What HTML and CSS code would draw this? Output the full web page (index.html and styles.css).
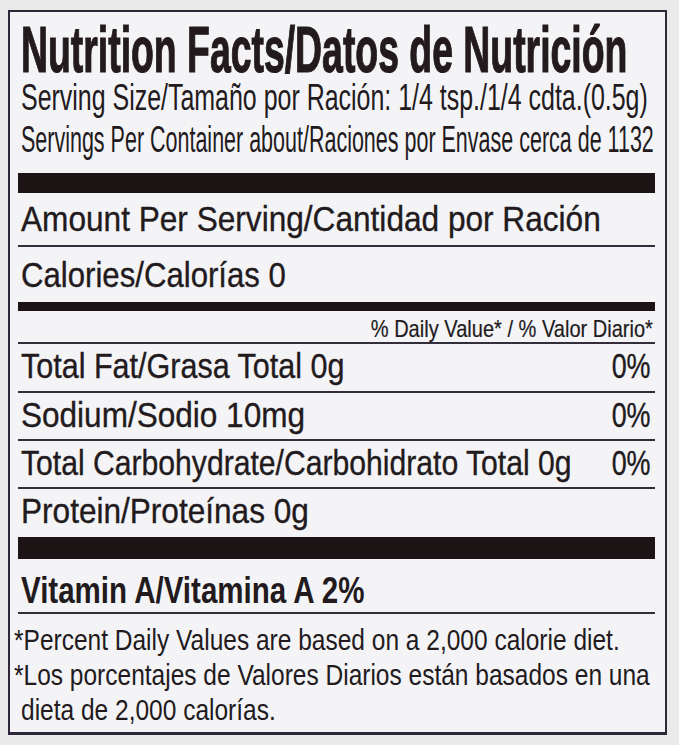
FILE: index.html
```html
<!DOCTYPE html>
<html lang="en">
<head>
<meta charset="utf-8">
<title>Nutrition Facts / Datos de Nutrición</title>
<link rel="stylesheet" href="styles.css">
</head>
<body>
<section class="label">
  <h1 class="title"><span class="sx">Nutrition Facts/Datos de Nutrición</span></h1>
  <div class="serving">
    <p class="serv serv-1"><span class="sx">Serving Size/Tamaño por Ración: 1/4 tsp./1/4 cdta.(0.5g)</span></p>
    <p class="serv serv-2"><span class="sx">Servings Per Container about/Raciones por Envase cerca de 1132</span></p>
  </div>
  <div class="bar bar-lg bar-top"></div>
  <div class="row row-amount"><span class="sx">Amount Per Serving/Cantidad por Ración</span></div>
  <div class="row row-cal ruled"><span class="sx">Calories/Calorías 0</span></div>
  <div class="bar bar-md"></div>
  <div class="dv"><span class="sx">% Daily Value* / % Valor Diario*</span></div>
  <div class="row nut ruled nut-fat"><span class="sx name">Total Fat/Grasa Total 0g</span><span class="sx pct">0%</span></div>
  <div class="row nut ruled nut-sod"><span class="sx name">Sodium/Sodio 10mg</span><span class="sx pct">0%</span></div>
  <div class="row nut ruled nut-carb"><span class="sx name">Total Carbohydrate/Carbohidrato Total 0g</span><span class="sx pct">0%</span></div>
  <div class="row nut ruled nut-pro"><span class="sx name">Protein/Proteínas 0g</span></div>
  <div class="bar bar-lg bar-bottom"></div>
  <div class="row row-vit"><span class="sx">Vitamin A/Vitamina A 2%</span></div>
  <div class="foot">
    <p class="fn"><span class="sx">*Percent Daily Values are based on a 2,000 calorie diet.</span></p>
    <p class="fn"><span class="sx">*Los porcentajes de Valores Diarios están basados en una</span></p>
    <p class="fn fn-cont"><span class="sx">dieta de 2,000 calorías.</span></p>
  </div>
</section>
</body>
</html>
```
FILE: styles.css
```css
* { box-sizing: border-box; margin: 0; padding: 0; }

html, body {
  background: #eaeaea;
  overflow: hidden;
}

body {
  margin: 0;
  font-family: "Liberation Sans", Arial, sans-serif;
  color: #221a1d;
}

.label {
  margin: 10px 0 0 8px;
  width: 659px;
  height: 725px;
  border: 2px solid #2e2739;
  border-bottom-width: 3px;
  background: #f4f4f6;
  padding: 0 10px 0 8px;
  overflow: hidden;
}

.sx {
  display: inline-block;
  white-space: nowrap;
  transform: scaleX(var(--sx, 1));
  transform-origin: 0 50%;
}

/* title */
.title {
  padding: 12px 0 0 3px;
  height: 64px;
  line-height: 52px;
  font-size: 64px;
  font-weight: 700;
  -webkit-text-stroke: 1.2px #221a1d;
  --sx: 0.584;
}

/* serving lines */
.serving { margin-top: 1px; padding-left: 3px; }
.serv {
  height: 42px;
  line-height: 42px;
  font-size: 36px;
  font-weight: 400;
}
.serv-1 { --sx: 0.693; }
.serv-2 { --sx: 0.597; }

/* bars */
.bar { background: #1d1416; }
.bar-lg { height: 20px; }
.bar-top { margin-top: 12px; }
.bar-bottom { height: 22px; }
.bar-md { height: 9px; }

/* rows */
.row {
  display: flex;
  justify-content: space-between;
  padding: 0 4px 0 3px;
  font-size: 35px;
  -webkit-text-stroke: 0.35px #221a1d;
}
.ruled { border-top: 2px solid #342d3b; }

.row-amount { height: 52px; line-height: 52px; --sx: 0.903; }
.row-cal { height: 57px; line-height: 55px; --sx: 0.89; }

.dv {
  height: 31px;
  padding: 4px 2px 0 0;
  line-height: 27px;
  font-size: 24px;
  text-align: right;
  -webkit-text-stroke: 0.2px #221a1d;
  --sx: 0.835;
}
.dv .sx { transform-origin: 100% 50%; }

.nut { line-height: 44px; }
.nut .name { flex: 1 1 0; min-width: 0; }
.nut .pct { flex: none; --sx: 0.77; transform-origin: 100% 50%; }
.nut-fat { height: 49px; --sx: 0.872; }
.nut-sod { height: 48px; --sx: 0.901; }
.nut-carb { height: 48px; --sx: 0.861; }
.nut-pro { height: 50px; --sx: 0.902; }

.row-vit {
  height: 53px;
  padding-top: 10px;
  line-height: 43px;
  font-size: 36px;
  font-weight: 700;
  -webkit-text-stroke: 0;
  --sx: 0.82;
}

/* footnote */
.foot {
  border-top: 2px solid #342d3b;
  padding-top: 9px;
  font-size: 29px;
  line-height: 35px;
  --sx: 0.845;
}
.fn { margin-left: -4px; height: 35px; }
.fn-cont { margin-left: 3px; }
```
